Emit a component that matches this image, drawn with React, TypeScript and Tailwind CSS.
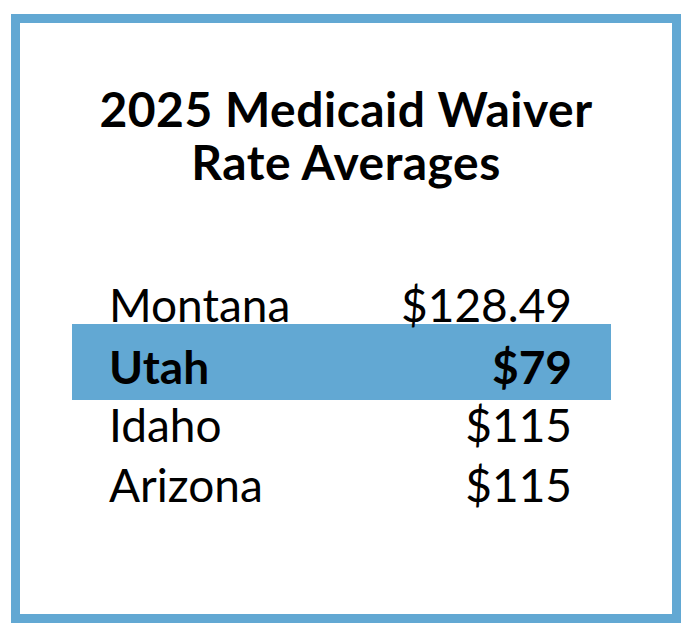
const rows = [
  { state: 'Montana', rate: '$128.49', pad: 'pt-[18px]' },
  { state: 'Utah', rate: '$79', highlight: true, pad: 'pt-[20px]' },
  { state: 'Idaho', rate: '$115', pad: 'pt-[2px]' },
  { state: 'Arizona', rate: '$115', pad: 'pt-[2px]' },
];

export default function App() {
  return (
    <div className="h-[634px] w-[692px] bg-white pl-[11px] pt-[14px] font-['Lato',sans-serif] text-black">
      <div className="flex h-[609px] w-[670px] flex-col border-[9px] border-[#62a8d3]">
        <h1 className="mt-[59px] text-center text-[48px] font-bold leading-[53px] tracking-[0.5px]">
          2025 Medicaid Waiver
          <br />
          Rate Averages
        </h1>

        <div className="ml-[52px] mt-[76px] w-[539px]">
          {rows.map((r) => (
            <div
              key={r.state}
              className={`flex justify-between pl-[37px] pr-[39px] text-[46px] leading-[46px] ${r.pad} ${
                r.highlight ? 'h-[76px] bg-[#62a8d3] font-bold' : 'h-[60px]'
              }`}
            >
              <span>{r.state}</span>
              <span>{r.rate}</span>
            </div>
          ))}
        </div>
      </div>
    </div>
  );
}
